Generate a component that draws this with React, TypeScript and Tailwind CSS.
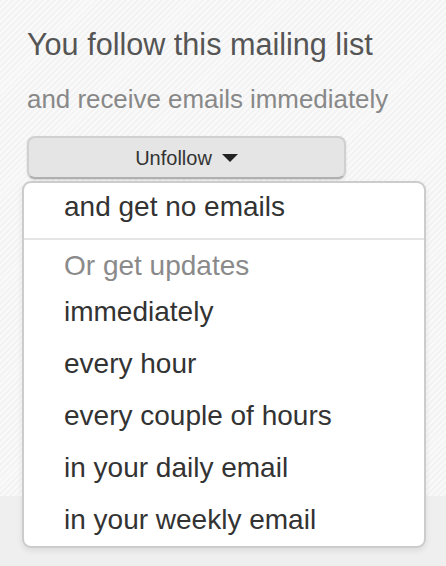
import React from "react";

const items = [
  "immediately",
  "every hour",
  "every couple of hours",
  "in your daily email",
  "in your weekly email",
];

export default function App() {
  return (
    <div
      className="relative w-[446px] h-[566px] overflow-hidden bg-[#efefef]"
      style={{ fontFamily: '"Liberation Sans", Arial, Helvetica, sans-serif' }}
    >
      <div className="flex h-[496px] flex-col items-start bg-[repeating-linear-gradient(135deg,#f3f3f3_0px,#f3f3f3_2px,#f9f9f9_2px,#f9f9f9_4.2px)] pl-[27px] pt-[23px]">
        <h1 className="text-[30.6px] leading-[42px] text-[#555] font-normal">
          You follow this mailing list
        </h1>
        <p className="mt-[16px] text-[25.9px] leading-[36px] text-[#888]">
          and receive emails immediately
        </p>

        <div className="relative mt-[19px] w-[319px]">
          <button className="flex w-[319px] h-[43px] items-center justify-center gap-[10px] rounded-[8px] border-2 border-[#d0d0d0] border-b-[#b0b0b0] bg-[#e5e5e5] text-[20px] text-[#333] shadow-[0_1px_2px_rgba(0,0,0,0.15)]">
            <span className="leading-[24px]">Unfollow</span>
            <span className="mt-[1px] h-0 w-0 border-l-[8px] border-r-[8px] border-t-[8px] border-l-transparent border-r-transparent border-t-[#222]" />
          </button>

          {/* content behind the menu, peeking at its right edge */}
          <div className="absolute left-[397px] top-[77px] h-[7px] w-[2px] bg-[#8f8f8f]" />
          <div className="absolute left-[397px] top-[129px] h-[52px] w-[2px] bg-[#a2a2a2]" />
          <div className="absolute left-[397px] top-[239px] h-[48px] w-[2px] bg-[#3f7a48]" />

          <div className="absolute left-[-5px] top-[45px] flex w-[404px] flex-col rounded-[9px] border-2 border-[rgba(0,0,0,0.2)] bg-white shadow-[0_3px_6px_rgba(0,0,0,0.08)]">
            <div className="pl-[40px] pt-[4px] pb-[6px] text-[28px] leading-[40px] text-[#333]">
              and get no emails
            </div>
            <div className="mt-[5px] h-[2px] bg-[#e5e5e5]" />
            <div className="pl-[40px] pt-[6px] text-[28px] leading-[40px] text-[#8a8a8a]">
              Or get updates
            </div>
            {items.map((t) => (
              <div
                key={t}
                className="pl-[40px] py-[6px] text-[28px] leading-[40px] text-[#333]"
              >
                {t}
              </div>
            ))}
          </div>
        </div>
      </div>
    </div>
  );
}
